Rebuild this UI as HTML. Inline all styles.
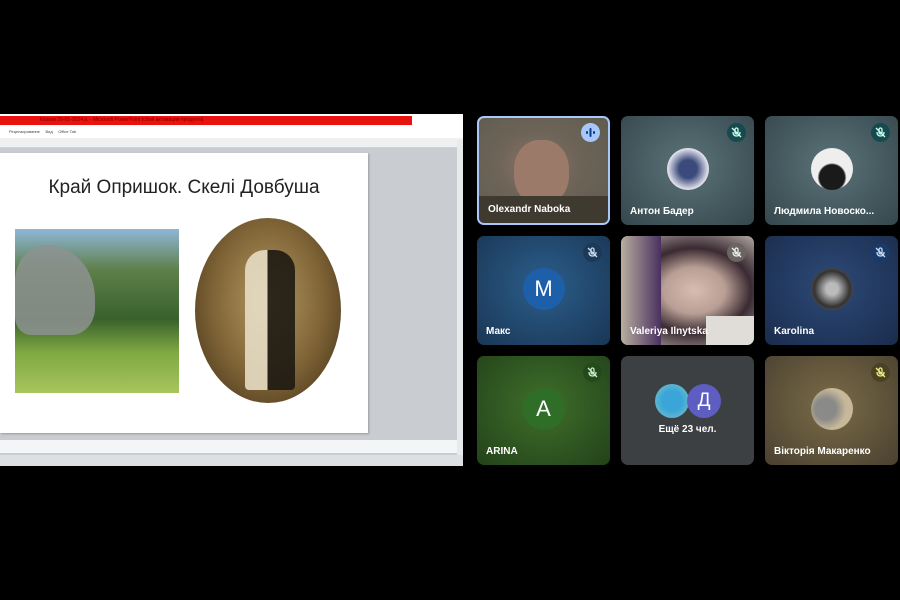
<!DOCTYPE html>
<html><head><meta charset="utf-8"><style>
*{margin:0;padding:0;box-sizing:border-box}
body{width:900px;height:600px;background:#000;position:relative;overflow:hidden;font-family:"Liberation Sans","Noto Sans CJK SC",sans-serif}
.abs{position:absolute}
.tile{position:absolute;width:133px;height:109px;border-radius:7px;overflow:hidden}
.name{position:absolute;left:9px;bottom:8px;color:#fff;font-size:10px;font-weight:bold;white-space:nowrap}
.mic{position:absolute;right:8px;top:7px;width:19px;height:19px;border-radius:50%;display:flex;align-items:center;justify-content:center}
.av{position:absolute;left:50%;top:50%;width:42px;height:42px;margin:-23px 0 0 -21px;border-radius:50%;color:#fff;font-size:22px;display:flex;align-items:center;justify-content:center}
</style></head><body>
<div class="abs" style="left:0;top:114px;width:463px;height:352px;background:#c9ccd0;border-radius:0 6px 0 0"></div>
<div class="abs" style="left:0;top:114px;width:463px;height:12px;background:#fff"></div>
<div class="abs" style="left:0;top:116px;width:412px;height:9px;background:#e8120f"></div>
<div class="abs" style="left:40px;top:116px;font-size:5px;color:#800;line-height:9px">Казахи 29-01-2024 р. - Microsoft PowerPoint (сбой активации продукта)</div>
<div class="abs" style="left:0;top:126px;width:463px;height:12px;background:#fff;font-size:4px;color:#444;line-height:12px;padding-left:9px">Рецензирование &nbsp;&nbsp;&nbsp; Вид &nbsp;&nbsp;&nbsp; Office Tab</div>
<div class="abs" style="left:0;top:138px;width:463px;height:10px;background:#eef0f2;border-bottom:1px solid #cfd3d7"></div>
<div class="abs" style="left:0;top:153px;width:368px;height:280px;background:#fff;box-shadow:1px 1px 2px #999"></div>
<div class="abs" style="left:0;top:177px;width:368px;text-align:center;font-size:19px;color:#222">Край Опришок. Скелі Довбуша</div>
<div class="abs" style="left:15px;top:229px;width:164px;height:164px;background:linear-gradient(180deg,#8fb7d6 0%,#5e7f4a 25%,#39612c 55%,#7fa842 75%,#a7c55c 100%)"></div>
<div class="abs" style="left:15px;top:245px;width:80px;height:90px;background:#8d9290;border-radius:40% 60% 30% 20%;opacity:.85"></div>
<div class="abs" style="left:195px;top:218px;width:146px;height:185px;border-radius:50%;background:radial-gradient(ellipse at 50% 45%,#b59a64 0%,#7d6235 55%,#3b2a16 100%)"></div>
<div class="abs" style="left:245px;top:250px;width:50px;height:140px;background:linear-gradient(90deg,#e6dcc4 0 45%,#1e1912 45%);border-radius:20px 20px 4px 4px;opacity:.9"></div>
<div class="abs" style="left:0;top:440px;width:463px;height:13px;background:#f4f5f6"></div>
<div class="abs" style="left:0;top:455px;width:463px;height:11px;background:#dde0e3"></div>
<div class="abs" style="left:457px;top:140px;width:6px;height:315px;background:#e8eaec"></div>
<div class="tile" style="left:477px;top:116px;background:radial-gradient(ellipse at 45% 45%,#8b7568 0%,#6e6458 40%,#5c5a4e 100%);border:2px solid #a8c7fa">
 <div class="abs" style="left:35px;top:22px;width:55px;height:65px;border-radius:45%;background:#9b7a6a"></div>
 <div class="abs" style="left:0;top:78px;width:133px;height:34px;background:#3f3a30"></div>
 <div class="mic" style="background:#a8c7fa;top:5px"><svg width="11" height="9"><rect x="1" y="3" width="2" height="3" rx="1" fill="#0b3a8a"/><rect x="4.5" y="0" width="2" height="9" rx="1" fill="#0b3a8a"/><rect x="8" y="3" width="2" height="3" rx="1" fill="#0b3a8a"/></svg></div>
 <div class="name">Olexandr Naboka</div></div>
<div class="tile" style="left:621px;top:116px;background:radial-gradient(ellipse at 50% 45%,#5b7378,#34474d)">
 <div class="av" style="background:radial-gradient(circle,#3a4a7a 30%,#e8e6f0 70%)"></div>
 <div class="mic" style="background:#164a4e"><svg width="11" height="11" stroke="#cfe" stroke-width="1.3" fill="none"><rect x="4" y="1" width="3" height="6" rx="1.5"/><path d="M2 5q0 4 3.5 4t3.5-4M1 1l9 9"/></svg></div>
 <div class="name">Антон Бадер</div></div>
<div class="tile" style="left:765px;top:116px;background:radial-gradient(ellipse at 50% 45%,#5b7378,#34474d)">
 <div class="av" style="background:radial-gradient(circle at 50% 70%,#1a1a1a 35%,#eee 40%)"></div>
 <div class="mic" style="background:#164a4e"><svg width="11" height="11" stroke="#cfe" stroke-width="1.3" fill="none"><rect x="4" y="1" width="3" height="6" rx="1.5"/><path d="M2 5q0 4 3.5 4t3.5-4M1 1l9 9"/></svg></div>
 <div class="name">Людмила Новоско...</div></div>
<div class="tile" style="left:477px;top:236px;background:radial-gradient(ellipse at 50% 45%,#2b5e8c,#1a3654)">
 <div class="av" style="background:#1d5fa8">M</div>
 <div class="mic" style="background:#1c3a58"><svg width="11" height="11" stroke="#cde" stroke-width="1.3" fill="none"><rect x="4" y="1" width="3" height="6" rx="1.5"/><path d="M2 5q0 4 3.5 4t3.5-4M1 1l9 9"/></svg></div>
 <div class="name">Макс</div></div>
<div class="tile" style="left:621px;top:236px;background:radial-gradient(ellipse at 55% 50%,#d8bdb0 0%,#b89e94 30%,#3a2a32 55%,#cfc8c0 100%)">
 <div class="abs" style="left:0;top:0;width:40px;height:109px;background:linear-gradient(90deg,#b8ae9e,#4a3060)"></div>
 <div class="abs" style="left:85px;top:80px;width:48px;height:29px;background:#e0dcd8"></div>
 <div class="mic" style="background:#6a6462"><svg width="11" height="11" stroke="#eee" stroke-width="1.3" fill="none"><rect x="4" y="1" width="3" height="6" rx="1.5"/><path d="M2 5q0 4 3.5 4t3.5-4M1 1l9 9"/></svg></div>
 <div class="name">Valeriya Ilnytska</div></div>
<div class="tile" style="left:765px;top:236px;background:radial-gradient(ellipse at 50% 45%,#2d4a78,#1a2c4c)">
 <div class="av" style="background:radial-gradient(circle,#bbb 20%,#333 60%,#777)"></div>
 <div class="mic" style="background:#193a6a"><svg width="11" height="11" stroke="#cde" stroke-width="1.3" fill="none"><rect x="4" y="1" width="3" height="6" rx="1.5"/><path d="M2 5q0 4 3.5 4t3.5-4M1 1l9 9"/></svg></div>
 <div class="name">Karolina</div></div>
<div class="tile" style="left:477px;top:356px;background:radial-gradient(ellipse at 50% 45%,#3f6f2a,#23421a)">
 <div class="av" style="background:#2f6e27">A</div>
 <div class="mic" style="background:#244a1c"><svg width="11" height="11" stroke="#cec" stroke-width="1.3" fill="none"><rect x="4" y="1" width="3" height="6" rx="1.5"/><path d="M2 5q0 4 3.5 4t3.5-4M1 1l9 9"/></svg></div>
 <div class="name">ARINA</div></div>
<div class="tile" style="left:621px;top:356px;background:#3c4043">
 <div class="abs" style="left:34px;top:28px;width:34px;height:34px;border-radius:50%;background:radial-gradient(circle,#3aa5d8 40%,#7fc6c6)"></div>
 <div class="abs" style="left:66px;top:28px;width:34px;height:34px;border-radius:50%;background:#5e5ec2;color:#fff;font-size:19px;display:flex;align-items:center;justify-content:center">Д</div>
 <div class="abs" style="left:0;top:68px;width:133px;text-align:center;color:#fff;font-size:10px;font-weight:bold">Ещё 23 чел.</div></div>
<div class="tile" style="left:765px;top:356px;background:radial-gradient(ellipse at 50% 45%,#7a6c48,#4a4030)">
 <div class="av" style="background:radial-gradient(circle at 35% 50%,#8a8a88 30%,#c8b89a 60%)"></div>
 <div class="mic" style="background:#4a4222"><svg width="11" height="11" stroke="#ee8" stroke-width="1.3" fill="none"><rect x="4" y="1" width="3" height="6" rx="1.5"/><path d="M2 5q0 4 3.5 4t3.5-4M1 1l9 9"/></svg></div>
 <div class="name">Вікторія Макаренко</div></div>
</body></html>
